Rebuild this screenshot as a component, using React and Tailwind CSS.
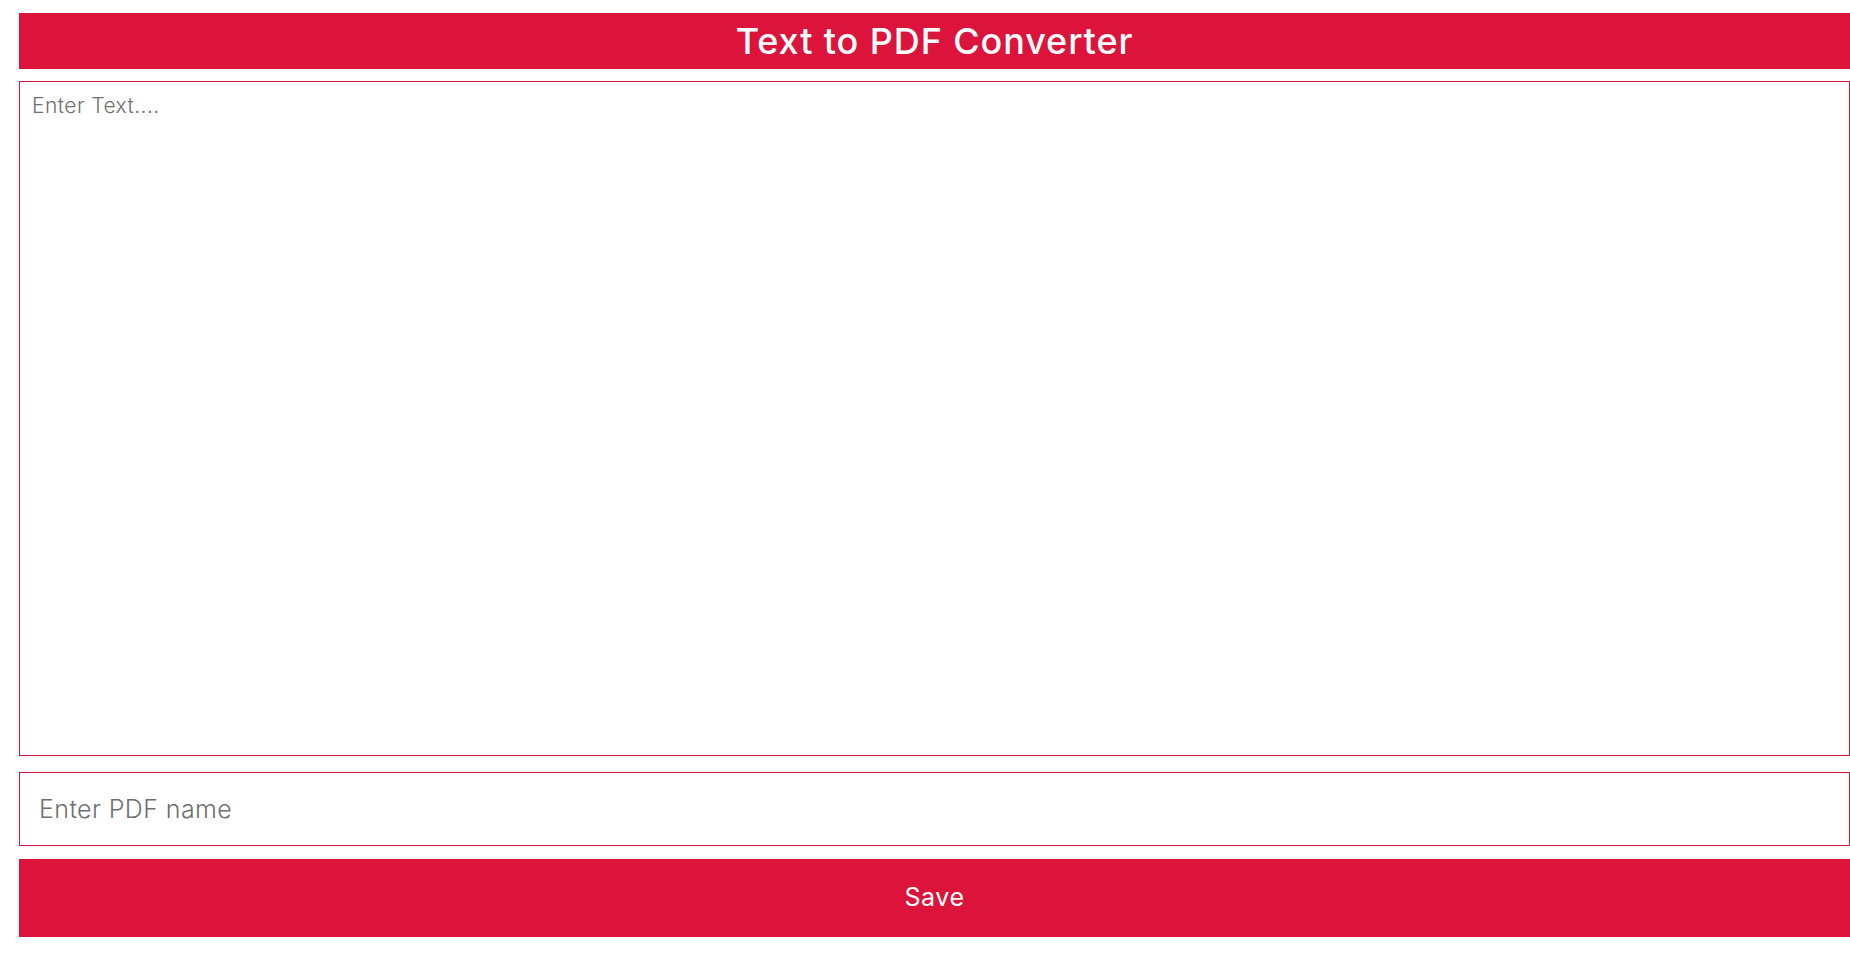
export default function App() {
  return (
    <div className="w-[1850px] h-[975px] bg-white pl-[19px] pt-[13px] overflow-hidden" style={{ fontFamily: "Inter, 'Open Sans', sans-serif" }}>
      <div className="h-[56px] bg-[#dc143c] flex items-center justify-center">
        <h1 className="text-white text-[36px] font-medium leading-none tracking-[0.9px]">Text to PDF Converter</h1>
      </div>
      <textarea
        className="block mt-[12px] w-full h-[675px] border border-[#dc143c] px-[12px] py-[8px] text-[21px] tracking-[0.45px] font-light text-gray-700 placeholder:text-[#6f6f6f] outline-none resize-none"
        placeholder="Enter Text...."
      />
      <input
        className="block mt-[16px] w-full h-[74px] border border-[#dc143c] px-[19px] text-[25px] tracking-[0.4px] font-light text-gray-700 placeholder:text-[#6f6f6f] outline-none"
        placeholder="Enter PDF name"
      />
      <button className="block mt-[13px] w-full h-[78px] bg-[#dc143c] text-white text-[25px] tracking-[0.6px]">Save</button>
    </div>
  );
}
